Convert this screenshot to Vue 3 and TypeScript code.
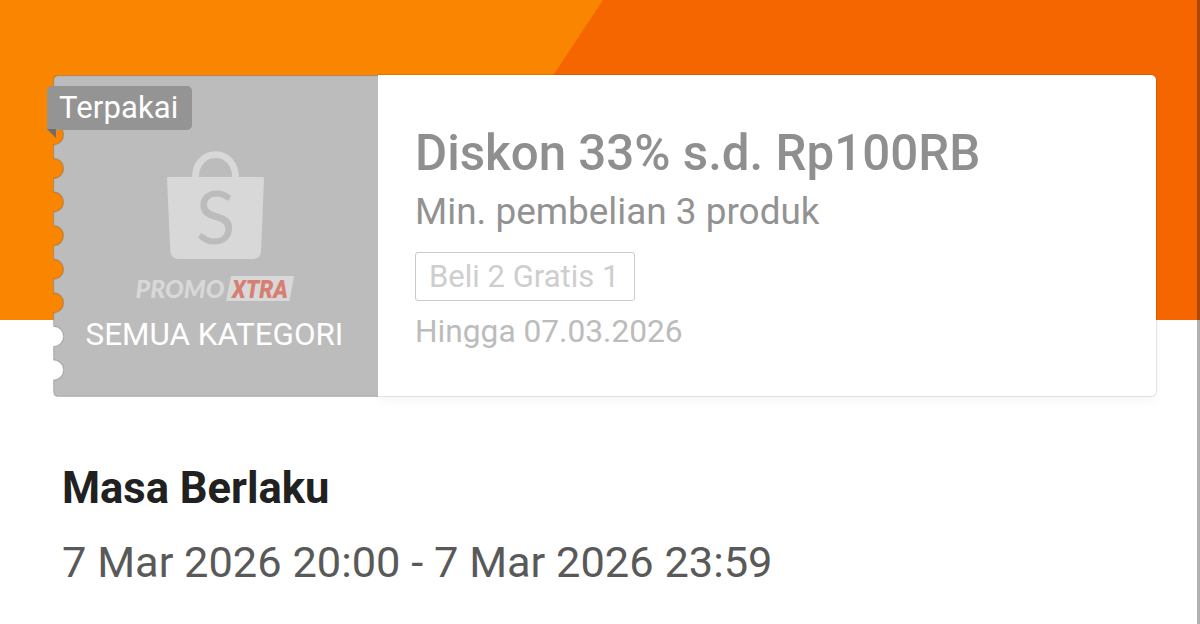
<script setup lang="ts">
interface Voucher {
  status: string
  category: string
  title: string
  minimum: string
  tag: string
  expiry: string
}

const voucher: Voucher = {
  status: 'Terpakai',
  category: 'SEMUA KATEGORI',
  title: 'Diskon 33% s.d. Rp100RB',
  minimum: 'Min. pembelian 3 produk',
  tag: 'Beli 2 Gratis 1',
  expiry: 'Hingga 07.03.2026',
}

const period = {
  heading: 'Masa Berlaku',
  range: '7 Mar 2026 20:00 - 7 Mar 2026 23:59',
}

// Vertical centres of the perforations along the ticket's left edge
const notches: number[] = Array.from({ length: 8 }, (_, i) => 59.8 + i * 33.6)

const stubOutline: string = [
  'M325 0.5 H6 Q0.5 0.5 0.5 6',
  ...notches.map((y) => `V${(y - 10).toFixed(1)} A10 10 0 0 1 0.5 ${(y + 10).toFixed(1)}`),
  'V316 Q0.5 321.5 6 321.5 H325',
].join(' ')
</script>

<template>
  <main class="page">
    <svg class="backdrop" viewBox="0 0 1200 320" aria-hidden="true">
      <rect width="1200" height="320" fill="#f98500" />
      <path d="M603 0 H1200 V320 H391 Z" fill="#f56600" />
    </svg>

    <section class="card">
      <div class="stub">
        <svg class="stub-shape" viewBox="0 0 325 322" aria-hidden="true">
          <path :d="stubOutline" fill="#bcbcbc" />
          <path :d="stubOutline" fill="none" stroke="#000" stroke-opacity="0.14" stroke-width="1.4" />
        </svg>
        <span class="status">{{ voucher.status }}</span>
        <svg class="logo" viewBox="0 0 170 160" aria-hidden="true">
          <path d="M65.500 34 V32 C65.500 19 74 9.700 85.500 9.700 S105.500 19 105.500 32 V34" fill="none" stroke="#d8d8d8" stroke-width="6.800" />
          <path d="M38.500 32 H132.500 Q134 32 134 33.500 L131 106 Q130.500 114 122 114 H49 Q41 114 40.300 106 L37 33.500 Q37 32 38.500 32 Z" fill="#d8d8d8" />
          <text class="bag-letter" x="85.500" y="99" text-anchor="middle">S</text>
          <path d="M101 131 H164 L159.500 156 H96 Z" fill="#d8d8d8" />
          <text class="promo" x="5.500" y="152.500" textLength="89" lengthAdjust="spacingAndGlyphs">PROMO</text>
          <text class="xtra" x="102" y="153" textLength="56" lengthAdjust="spacingAndGlyphs">XTRA</text>
        </svg>
        <span class="category">{{ voucher.category }}</span>
      </div>

      <div class="details">
        <h1 class="title">{{ voucher.title }}</h1>
        <p class="minimum">{{ voucher.minimum }}</p>
        <span class="tag">{{ voucher.tag }}</span>
        <p class="expiry">{{ voucher.expiry }}</p>
      </div>
    </section>

    <section class="period">
      <h2 class="heading">{{ period.heading }}</h2>
      <p class="range">{{ period.range }}</p>
    </section>
  </main>
</template>

<style>
body {
  margin: 0;
  overflow: hidden;
}
</style>

<style scoped>
.page {
  position: relative;
  box-sizing: border-box;
  width: 1200px;
  height: 624px;
  padding: 75px 44px 0 53px;
  overflow: hidden;
  background: #fff;
  font-family: Roboto, "Liberation Sans", sans-serif;
}
.page::after {
  content: "";
  position: absolute;
  inset: 0 0 0 auto;
  width: 3px;
  background: rgba(0, 0, 0, 0.3);
}
.backdrop {
  position: absolute;
  top: 0;
  left: 0;
  width: 1200px;
  height: 320px;
}
.card {
  position: relative;
  display: flex;
  width: 1103px;
  height: 322px;
}
.stub {
  position: relative;
  display: flex;
  flex-direction: column;
  align-items: center;
  flex: 0 0 325px;
}
.stub-shape {
  position: absolute;
  inset: 0;
  width: 325px;
  height: 322px;
}
.status {
  position: absolute;
  top: 11px;
  left: -6px;
  box-sizing: border-box;
  width: 145px;
  height: 44px;
  padding-left: 12px;
  border-radius: 5px 5px 5px 0;
  background: #949494;
  color: #fff;
  font-size: 31px;
  line-height: 43px;
  letter-spacing: 0.15px;
  white-space: nowrap;
}
.status::after {
  content: "";
  position: absolute;
  top: 43px;
  left: 0;
  border-top: 9px solid #6d6d6d;
  border-left: 9px solid transparent;
}
.logo {
  position: relative;
  width: 170px;
  height: 160px;
  margin: 70px 2px 0 0;
}
.bag-letter {
  font: 400 73px Lato, sans-serif;
  fill: #bcbcbc;
}
.promo {
  font: italic 900 24.5px Lato, sans-serif;
  fill: #d8d8d8;
}
.xtra {
  font: italic 900 26px Roboto, sans-serif;
  fill: #d67f73;
}
.category {
  position: relative;
  margin: 10px 2px 0 0;
  color: #fff;
  font-size: 31.4px;
  line-height: 40px;
  white-space: nowrap;
}
.details {
  box-sizing: border-box;
  flex: 1;
  height: 321px;
  padding: 50px 0 0 37px;
  background: #fff;
  border-radius: 0 5px 5px 0;
  box-shadow: 0 0 1px 1px rgba(0, 0, 0, 0.1), 0 6px 10px rgba(0, 0, 0, 0.03);
  white-space: nowrap;
}
.title {
  margin: 0;
  color: #8f8f8f;
  font-size: 49.25px;
  font-weight: 500;
  line-height: 56px;
}
.minimum {
  margin: 9px 0 0;
  color: #929292;
  font-size: 36.9px;
  line-height: 44px;
}
.tag {
  display: block;
  box-sizing: border-box;
  width: 220px;
  height: 49px;
  margin-top: 18px;
  padding-left: 13px;
  border: 1.5px solid #cbcbcb;
  border-radius: 3px;
  color: #cecece;
  font-size: 31px;
  line-height: 48px;
}
.expiry {
  margin: 11px 0 0;
  color: #bcbcbc;
  font-size: 31.7px;
  line-height: 40px;
}
.period {
  padding: 65px 0 0 9px;
  white-space: nowrap;
}
.heading {
  margin: 0;
  color: #212121;
  font-size: 43.5px;
  font-weight: 700;
  line-height: 53px;
}
.range {
  margin: 21px 0 0;
  color: #595959;
  font-size: 43.4px;
  line-height: 53px;
}
</style>
